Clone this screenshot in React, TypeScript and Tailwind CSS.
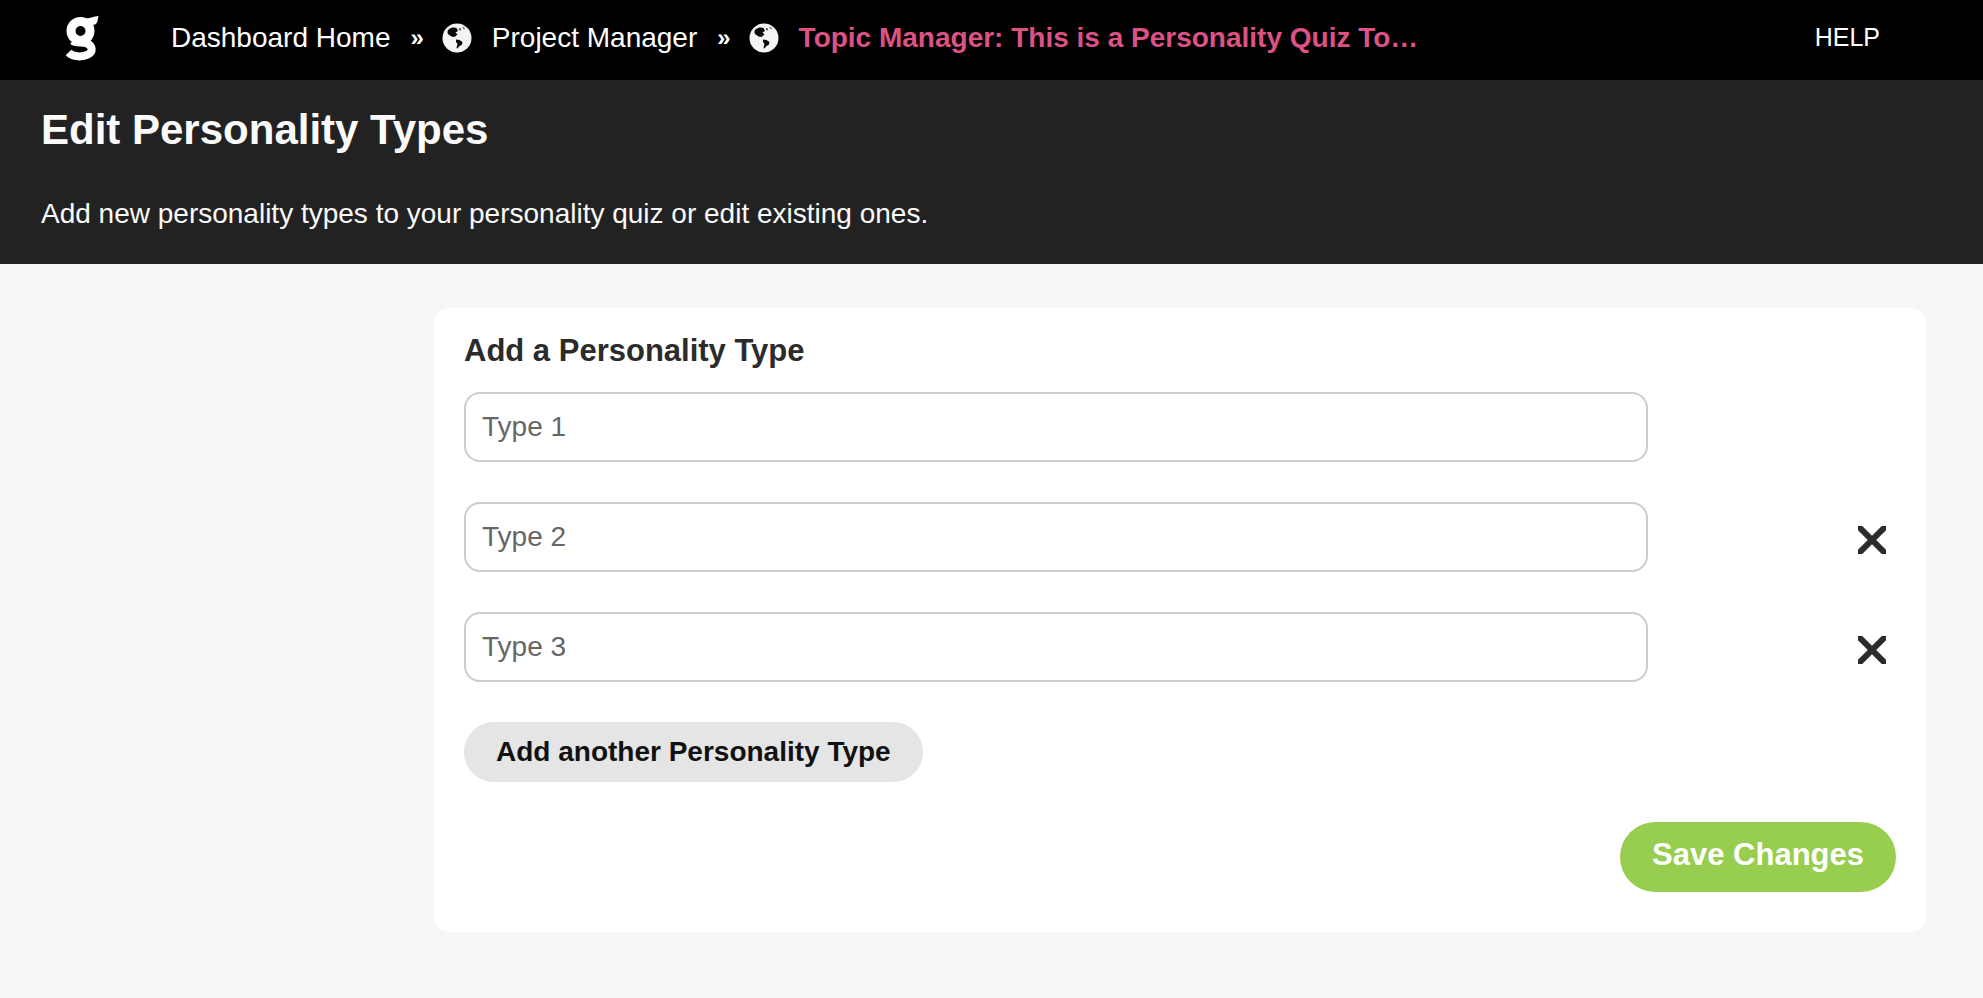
import { useState } from "react";

function Logo() {
  return (
    <svg width="36" height="48" viewBox="0 0 36 48" fill="none" aria-hidden="true">
      <circle cx="16.500" cy="17" r="9.500" stroke="white" strokeWidth="9" />
      <path d="M19 4.500 C25 5 29 2.500 34.500 2 L33.500 7 C32.500 10 31 11 28 11 L23 11 Z" fill="white" />
      <path
        d="M9 27 C12 30 18 27.500 23 29.500 C29 32 29 38 24 40.500 C18 43.500 9 43 4.500 38.500"
        stroke="white"
        strokeWidth="8"
      />
    </svg>
  );
}

function Globe() {
  return (
    <svg width="30" height="30" viewBox="0 0 30 30" aria-hidden="true">
      <circle cx="15" cy="15" r="14.500" fill="#f4f4f4" />
      <path
        d="M7 6 C9 4.500 12 4 14.500 5 L16 8 L13.500 9.500 L15.500 11.500 L12.500 14 L9.500 13.500 L6 11 C5 9 5.500 7.500 7 6 Z"
        fill="#0a0a0a"
      />
      <path d="M14 16.500 L17.500 17 L20.500 19 L20 21.500 L17 23.500 L15.500 25.500 L14.500 25 L15.500 21 L14 19 Z" fill="#0a0a0a" />
      <path d="M17 5 L19 5.500 L19 7.500 L17 7 Z M20 3.500 L23 5 L22 6.500 Z" fill="#555555" />
    </svg>
  );
}

function CloseIcon() {
  return (
    <svg width="28" height="28" viewBox="0 0 28 28" aria-hidden="true">
      <path d="M0 0 L28 28 M28 0 L0 28" stroke="#2b2b2b" strokeWidth="6" />
    </svg>
  );
}

function Separator() {
  return <span className="mr-[18px] ml-5 text-[24px] leading-7 font-bold">»</span>;
}

export default function App() {
  const [types, setTypes] = useState(["", "", ""]);

  const updateType = (index: number, value: string) => {
    setTypes(types.map((type, i) => (i === index ? value : type)));
  };

  const removeType = (index: number) => {
    setTypes(types.filter((_, i) => i !== index));
  };

  return (
    <div className="min-h-screen bg-[#f7f7f7] font-['Liberation_Sans',sans-serif] text-[28px]">
      <header className="flex h-20 items-center bg-black pb-1 pl-16 pr-[103px] text-white">
        <a href="#" aria-label="Home">
          <Logo />
        </a>
        <nav className="ml-[71px] flex items-center whitespace-nowrap">
          <a href="#">Dashboard Home</a>
          <Separator />
          <a href="#" className="flex items-center gap-5">
            <Globe />
            Project Manager
          </a>
          <Separator />
          <a href="#" className="flex items-center gap-5 font-bold text-[#dc5285]">
            <Globe />
            Topic Manager: This is a Personality Quiz To…
          </a>
        </nav>
        <a href="#" className="ml-auto text-[25px]">
          HELP
        </a>
      </header>

      <section className="bg-[#222222] px-[41px] pt-6 pb-[30px] text-[#fafafa]">
        <h1 className="text-[42px] leading-[52px] font-bold">Edit Personality Types</h1>
        <p className="mt-[38px] leading-10">
          Add new personality types to your personality quiz or edit existing ones.
        </p>
      </section>

      <main className="pt-11 pr-[57px] pb-11 pl-[434px]">
        <form
          className="rounded-2xl bg-white px-[30px] pt-5 pb-10"
          onSubmit={(e) => e.preventDefault()}
        >
          <h2 className="mb-[18px] text-[31px] leading-[46px] font-bold text-[#2b2b2b]">
            Add a Personality Type
          </h2>

          <div className="space-y-10">
            {types.map((type, index) => (
              <div key={index} className="flex">
                <input
                  type="text"
                  aria-label={`Type ${index + 1}`}
                  placeholder={`Type ${index + 1}`}
                  value={type}
                  onChange={(e) => updateType(index, e.target.value)}
                  className="h-[70px] min-w-0 flex-1 rounded-2xl border-2 border-[#cccccc] bg-white px-4 text-[#2b2b2b] placeholder:text-[#666666]"
                />
                <div className="flex w-[248px] items-center justify-end pt-1.5 pr-2.5">
                  {index > 0 && (
                    <button
                      type="button"
                      aria-label={`Remove type ${index + 1}`}
                      onClick={() => removeType(index)}
                    >
                      <CloseIcon />
                    </button>
                  )}
                </div>
              </div>
            ))}
          </div>

          <button
            type="button"
            onClick={() => setTypes([...types, ""])}
            className="mt-10 block h-[60px] rounded-full bg-[#e5e5e5] px-8 font-bold text-[#111111]"
          >
            Add another Personality Type
          </button>

          <div className="mt-10 flex justify-end">
            <button
              type="submit"
              className="h-[70px] rounded-full bg-[#97ce4f] px-8 pb-1 text-[31px] font-bold text-white"
            >
              Save Changes
            </button>
          </div>
        </form>
      </main>
    </div>
  );
}
